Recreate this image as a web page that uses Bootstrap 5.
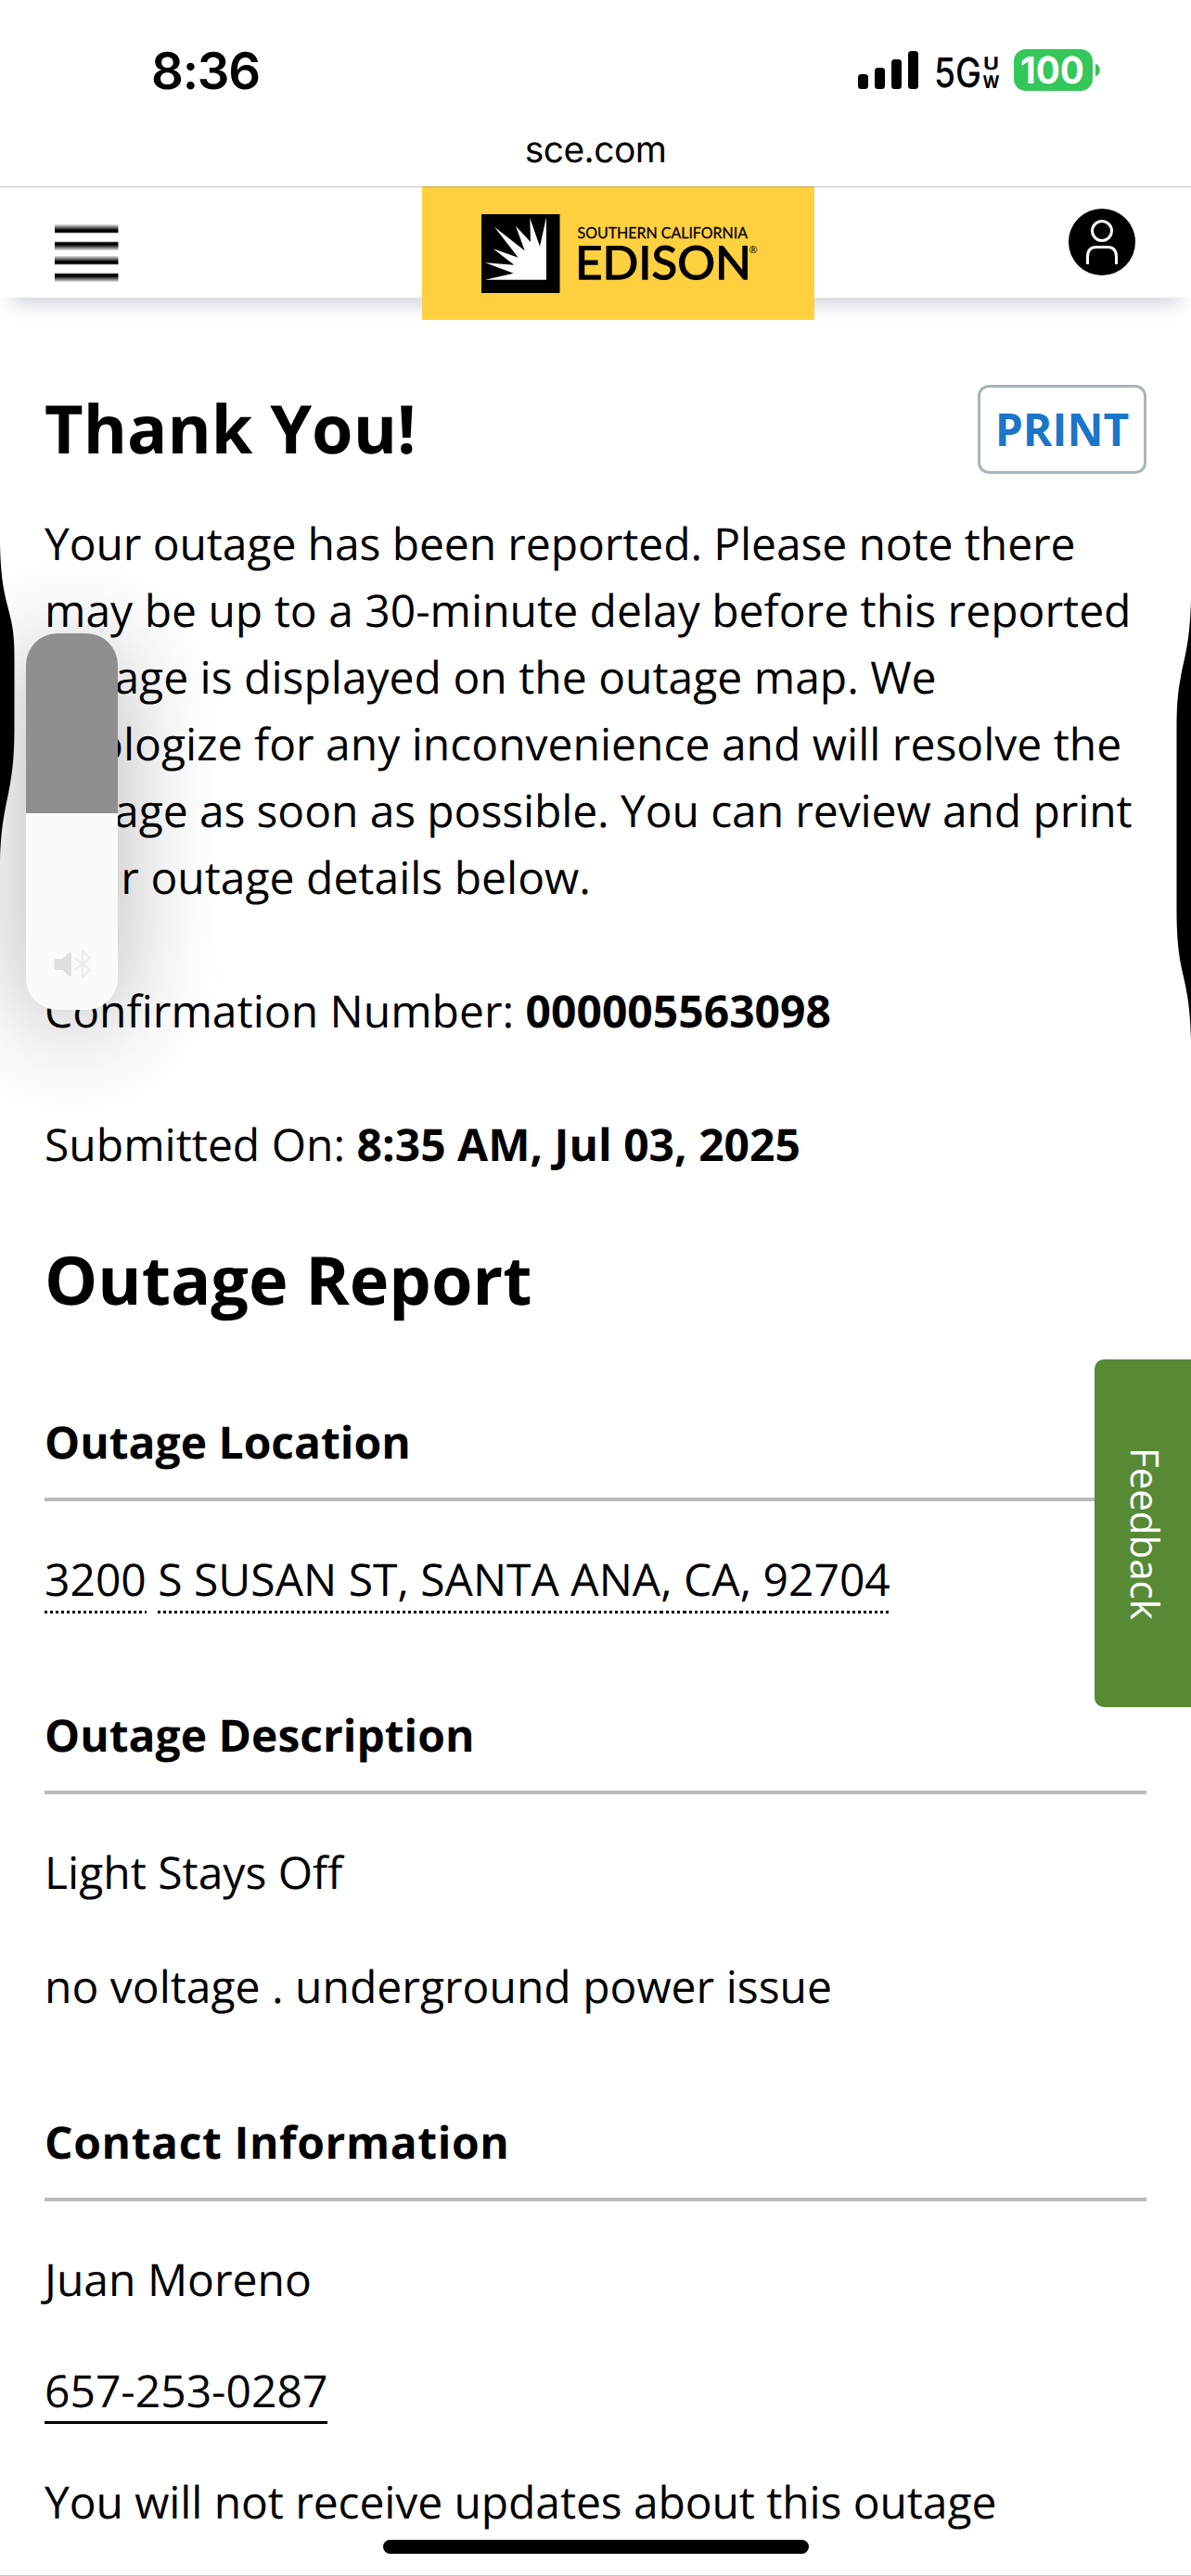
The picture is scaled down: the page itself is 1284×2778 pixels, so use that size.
<!DOCTYPE html>
<html lang="en">
<head>
<meta charset="utf-8">
<meta name="viewport" content="width=device-width, initial-scale=1">
<title>Outage Report</title>
<link href="https://cdn.jsdelivr.net/npm/bootstrap@5.3.0/dist/css/bootstrap.min.css" rel="stylesheet">
<style>
body{font-family:"Open Sans","Noto Sans",sans-serif;font-size:48px;line-height:72px;color:#000;background:#fff;text-rendering:geometricPrecision}
svg{display:block}
.screen{width:1284px;height:2778px}
.status-bar{height:151px;padding:0 96px 0 163px;font-family:Inter,"Liberation Sans",sans-serif}
.status-bar svg{margin-top:40px}
.clock{font-size:54.5px;font-weight:600;line-height:60px;margin-top:47px;letter-spacing:-1.2px}
.address-bar{height:51px;border-bottom:1px solid #c6c6c6;font-family:Inter,"Liberation Sans",sans-serif;font-size:39px;line-height:22px;letter-spacing:-.6px}
.site-header{height:119px;padding:0 60px 0 58px;box-shadow:0 18px 20px -12px rgba(110,130,155,.36)}
.menu-icon{margin-top:38px}
.user-icon{margin-top:23px}
.brand-tile{position:absolute;left:455px;top:-1px;width:423px;height:144px;background:#ffd140;border-top:1px solid #c9a53a}
.report{padding:94px 48px 0}
h1,h2{font-size:72px;line-height:96px;font-weight:700}
h1{margin-top:-1px}
.btn-print{width:182px;height:96px;border:3px solid #a5b5bd;border-radius:12px;color:#1b75c8;font-size:48px;line-height:72px;font-weight:700;padding:0}
.intro{margin-top:40px}
.submitted{margin-top:72px}
h2{margin-top:61px}
.report h3{font-size:48px;line-height:72px;font-weight:700;padding-bottom:23px;border-bottom:4px solid #bbb}
.sect-first{margin-top:92px}
.sect{margin-top:96px}
.detail{margin-top:49px}
.spaced{letter-spacing:.6px}
.snug{letter-spacing:-.1px}
.dotted{padding-bottom:4px;background:repeating-linear-gradient(90deg,#000 0 3px,transparent 3px 6px) left bottom/100% 3px no-repeat}
.phone{border-bottom:3px solid #000;color:#000}
.edge-left{left:0;top:587px}
.edge-right{right:0;top:646px}
.volume{left:28px;top:683px;width:99px;height:406px;border-radius:34px;background:#fbfbfb;box-shadow:0 16px 110px rgba(0,0,0,.3)}
.volume-level{height:194px;background:#8f8f8f;border-radius:34px 34px 0 0}
.volume svg{margin:147px 0 0 29px}
.feedback{right:0;top:1466px;width:104px;height:375px;background:#588a36;border-radius:10px 0 0 10px;writing-mode:vertical-rl;font-size:42px;line-height:100px;color:#fff}
.home-bar{left:413px;top:2739px;width:459px;height:15px;border-radius:8px;background:#000}
.bottom-line{left:0;top:2777px;height:1px;background:#c8c8c8}
</style>
<script src="https://cdn.jsdelivr.net/npm/bootstrap@5.3.0/dist/js/bootstrap.bundle.min.js"></script>
</head>
<body>
<div class="screen position-relative overflow-hidden">
  <div class="status-bar d-flex justify-content-between align-items-start">
    <div class="clock">8:36</div>
    <svg width="264" height="72" viewBox="924 40 264 72" role="img" aria-label="Signal, 5G UW, battery 100">
      <rect x="925" y="80" width="11" height="16" rx="3.5"/><rect x="943" y="73" width="11" height="23" rx="3.5"/>
      <rect x="961" y="64" width="11" height="32" rx="3.5"/><rect x="979" y="55" width="11" height="41" rx="3.5"/>
      <g font-family="Inter, sans-serif">
        <text x="1007" y="94" font-size="44" font-weight="500" textLength="51" lengthAdjust="spacingAndGlyphs">5G</text>
        <text x="1060" y="75" font-size="19" font-weight="700" textLength="17" lengthAdjust="spacingAndGlyphs">U</text>
        <text x="1059.500" y="94.500" font-size="19" font-weight="700" textLength="18" lengthAdjust="spacingAndGlyphs">W</text>
        <rect x="1093" y="53" width="85" height="45" rx="13" fill="#34c759"/>
        <path d="M1181 68.500a7.500 7.500 0 0 1 0 14z" fill="#34c759"/>
        <text x="1100" y="90" font-size="40" font-weight="700" fill="#fff" textLength="69" lengthAdjust="spacingAndGlyphs">100</text>
      </g>
    </svg>
  </div>
  <div class="address-bar text-center">sce.com</div>

  <header class="site-header position-relative d-flex justify-content-between align-items-start">
    <svg class="menu-icon" width="70" height="66" viewBox="58 240 70 66" aria-label="Menu">
      <defs>
        <linearGradient id="barDown" x1="0" y1="0" x2="0" y2="1"><stop offset="0" stop-color="#000" stop-opacity=".1"/><stop offset=".65" stop-color="#000"/><stop offset=".85" stop-color="#000"/><stop offset="1" stop-color="#000" stop-opacity=".4"/></linearGradient>
        <linearGradient id="barUp" x1="0" y1="1" x2="0" y2="0"><stop offset="0" stop-color="#000" stop-opacity=".1"/><stop offset=".65" stop-color="#000"/><stop offset=".85" stop-color="#000"/><stop offset="1" stop-color="#000" stop-opacity=".4"/></linearGradient>
      </defs>
      <rect x="59" y="242" width="68.500" height="9.500" fill="url(#barDown)"/><rect x="59" y="260.500" width="68.500" height="9.500" fill="url(#barUp)"/>
      <rect x="59" y="276" width="68.500" height="9.500" fill="url(#barDown)"/><rect x="59" y="294.500" width="68.500" height="9.500" fill="url(#barUp)"/>
    </svg>
    <div class="brand-tile">
      <svg width="423" height="143" viewBox="455 202 423 143" role="img" aria-label="Southern California Edison">
        <rect x="519" y="231" width="84.500" height="85"/>
        <path transform="translate(440 190) scale(.33333)" fill="#fff" d="M447 335V133L426 227 394 136 396 213 348 161 377 241 279 164 356 263 275 235 343 287 249 280 341 314 249 335Z"/>
        <g font-family="Lato, sans-serif" stroke="#000">
          <text x="622.500" y="257.300" font-size="16.800" stroke-width=".3" textLength="183.500" lengthAdjust="spacingAndGlyphs">SOUTHERN CALIFORNIA</text>
          <text x="620" y="301" font-size="49.500" stroke-width="1.300" textLength="190" lengthAdjust="spacingAndGlyphs">EDISON</text>
          <text x="807.500" y="273" font-size="11" stroke="none">®</text>
        </g>
      </svg>
    </div>
    <svg class="user-icon" width="72" height="72" viewBox="1152 225 72 72" aria-label="Account">
      <circle cx="1188" cy="261" r="36"/>
      <g fill="none" stroke="#fff" stroke-width="3"><circle cx="1188" cy="249" r="10.500"/><path d="M1172.500 285v-8q0-10.500 9.500-10.500h12q9.500 0 9.500 10.500v8"/></g>
    </svg>
  </header>

  <main class="report">
    <div class="d-flex justify-content-between align-items-start">
      <h1 class="mb-0">Thank You!</h1>
      <button class="btn btn-print" type="button">PRINT</button>
    </div>
    <p class="intro mb-0"><span class="snug">Your outage has been reported. Please note there</span><br>may be up to a 30-minute delay before this reported<br>outage is displayed on the outage map. We<br>apologize for any inconvenience and will resolve the<br><span class="snug">outage as soon as possible. You can review and print</span><br>your outage details below.</p>
    <p class="submitted mb-0">Confirmation Number: <b>000005563098</b></p>
    <p class="submitted mb-0">Submitted On: <b>8:35 AM, Jul 03, 2025</b></p>

    <h2 class="mb-0">Outage Report</h2>
    <section class="sect-first">
      <h3 class="mb-0">Outage Location</h3>
      <p class="detail mb-0"><span class="dotted">3200</span> <span class="dotted">S SUSAN ST</span><span class="dotted">, </span><span class="dotted">SANTA ANA</span><span class="dotted">, </span><span class="dotted">CA</span><span class="dotted">, </span><span class="dotted">92704</span></p>
    </section>
    <section class="sect">
      <h3 class="mb-0">Outage Description</h3>
      <p class="detail mb-0">Light Stays Off</p>
      <p class="mb-0" style="margin-top:51px">no voltage . underground power issue</p>
    </section>
    <section class="sect">
      <h3 class="spaced mb-0">Contact Information</h3>
      <p class="detail mb-0">Juan Moreno</p>
      <p class="mb-0 mt-5"><a class="phone text-decoration-none" href="#">657-253-0287</a></p>
      <p class="snug mb-0 mt-5">You will not receive updates about this outage</p>
    </section>
  </main>

  <div class="volume position-absolute"><div class="volume-level"></div>
    <svg width="44" height="32" viewBox="57 1024 44 32" aria-label="Volume">
      <path d="M61 1034h6l7-6.500q3-1.500 3 1.500v22q0 3-3 1.500l-7-6.500h-6q-2.500 0-2.500-2.500v-7q0-2.500 2.500-2.500z" fill="#dfdfdf"/>
      <path d="M81.500 1033.500l15.500 12.500-8 7v-27l8 7-15.500 12.500" fill="none" stroke="#ececec" stroke-width="2.400" stroke-linejoin="round" stroke-linecap="round"/>
    </svg>
  </div>
  <svg class="edge-left position-absolute" width="16" height="343" viewBox="0 0 16 343"><path d="M0 0C1 50 8 62 12 82 15 96 15.500 108 15.500 125V195C15.500 220 14.500 238 11 258 6 286 1 300 0 343Z"/></svg>
  <svg class="edge-right position-absolute" width="16" height="475" viewBox="0 0 16 475"><path d="M16 0C15 48 8 66 5 84 1.500 102 .5 116 .5 140V335C.5 360 2 378 5 394 9 414 15 430 16 475Z"/></svg>
  <div class="feedback position-absolute text-center">Feedback</div>
  <div class="home-bar position-absolute"></div>
  <div class="bottom-line position-absolute w-100"></div>
</div>
</body>
</html>
